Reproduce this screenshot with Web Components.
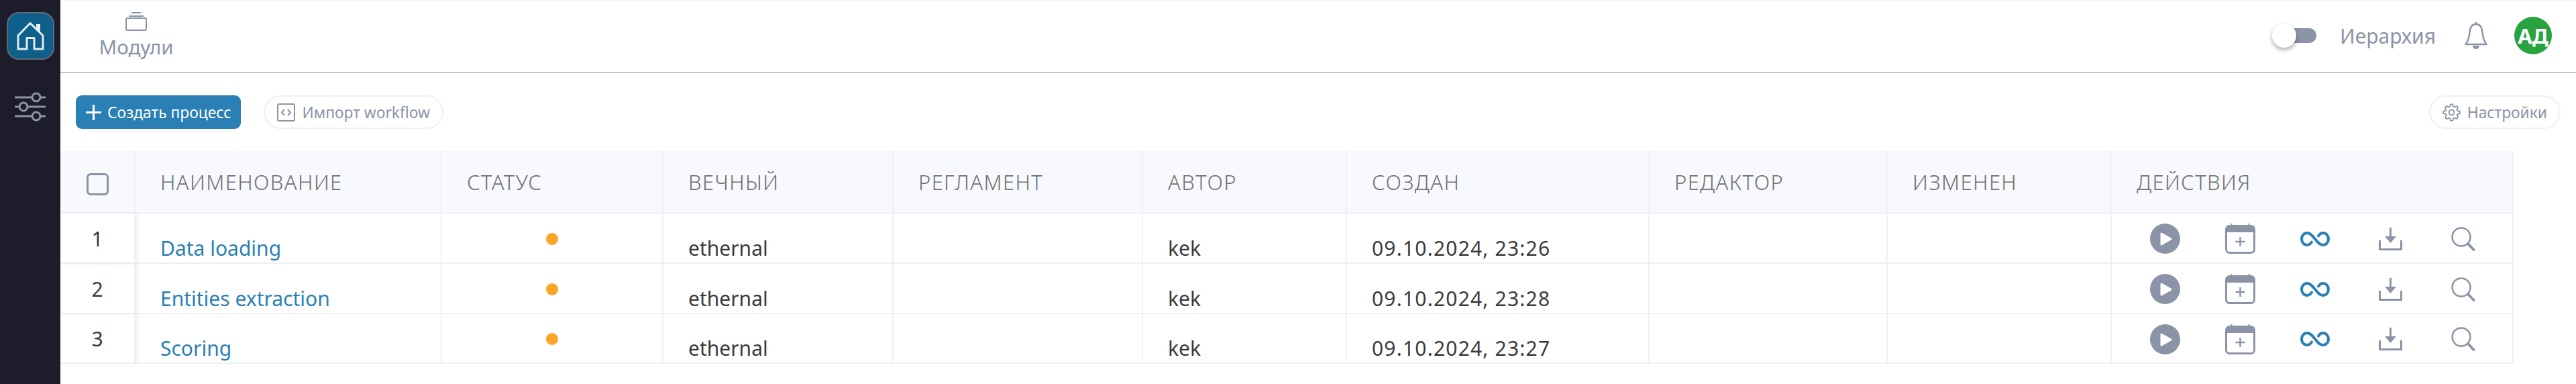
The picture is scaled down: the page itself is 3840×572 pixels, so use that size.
<!DOCTYPE html>
<html lang="ru">
<head>
<meta charset="utf-8">
<title>Модули</title>
<style>
  html, body { margin: 0; height: 100%; background: #fff; }
  body { font-family: "Noto Sans", "Open Sans", sans-serif; color: #333; display: flex; min-height: 572px; }
  main-view { flex: 1; min-width: 0; }
</style>
</head>
<body>
<side-rail></side-rail>
<main-view>
  <top-bar></top-bar>
  <process-toolbar></process-toolbar>
  <process-table></process-table>
</main-view>

<script>
const GREY = '#8a94a6';
const BLUE = '#2a7fb5';

/**
 * Dark navigation rail with the home button and the settings sliders.
 */
class SideRail extends HTMLElement {
    constructor() {
        super();
        this.attachShadow({ mode: 'open' });
    }

    connectedCallback() {
        this.shadowRoot.innerHTML = `
            <style>
                :host { display: flex; flex-direction: column; align-items: center; flex: none; width: 90px; background: #1c1c2b; padding-top: 18px; box-sizing: border-box; }
                .home { width: 71px; height: 71px; box-sizing: border-box; background: #0e5f8a; border: 2px solid #616a79; border-radius: 18px; display: flex; align-items: center; justify-content: center; }
                .filters { margin-top: 48px; display: block; }
            </style>
            <div class="home">
                <svg width="41" height="44" viewBox="0 0 41 44" fill="none" stroke="#e3ecf2" stroke-width="3" stroke-linejoin="round">
                    <path d="M2 21 20 2.500 39 21V41H26V24.500H15V41H2Z"/>
                    <path d="M29 4h6v12l-6-6z" fill="#e3ecf2" stroke="none"/>
                </svg>
            </div>
            <svg class="filters" width="46" height="44" viewBox="0 0 46 44" fill="none" stroke="${GREY}" stroke-width="3">
                <path d="M0 8H26M38 8H46M0 22H7M19 22H46M0 36H26M38 36H46"/>
                <circle cx="32" cy="8" r="6"/><circle cx="13" cy="22" r="6"/><circle cx="32" cy="36" r="6"/>
            </svg>
        `;
    }
}
customElements.define('side-rail', SideRail);

/**
 * Top bar: the module tab on the left, hierarchy switch, bell and avatar on the right.
 */
class TopBar extends HTMLElement {
    constructor() {
        super();
        this.attachShadow({ mode: 'open' });
    }

    connectedCallback() {
        this.shadowRoot.innerHTML = `
            <style>
                :host { display: flex; align-items: flex-start; height: 109px; box-sizing: border-box; border-bottom: 2px solid #c0c5d2; border-top: 1px solid #f5f5f5; }
                .tab { margin: 17px 0 0 55px; width: 116px; display: flex; flex-direction: column; align-items: center; color: ${GREY}; font-size: 29.500px; line-height: 34px; }
                .tab svg { display: block; margin-bottom: 7px; }
                .right { margin: 24px 36px 0 auto; display: flex; align-items: center; height: 56px; }
                .switch { position: relative; width: 66px; height: 22px; margin-top: 0; }
                .track { display: block; margin-left: 4px; height: 22px; background: ${GREY}; border-radius: 11px; }
                .knob { position: absolute; left: 0; top: -7px; width: 36px; height: 36px; border-radius: 50%; background: #fff; box-shadow: 0 3px 6px rgba(0,0,0,.35); }
                .label { margin-left: 35px; width: 146px; white-space: nowrap; color: ${GREY}; font-size: 30px; }
                .bell { margin-left: 40px; display: block; }
                .avatar { margin-left: 40px; width: 56px; height: 56px; border-radius: 50%; background: #28a33f; color: #fff; font-weight: 700; font-size: 31px; display: flex; align-items: center; justify-content: center; }
            </style>
            <div class="tab">
                <svg width="32" height="28" viewBox="0 0 32 28" fill="none" stroke="${GREY}" stroke-width="2">
                    <path d="M9 1H23M5 6H27"/>
                    <rect x="1" y="9" width="30" height="18" rx="2"/>
                </svg>
                <span>Модули</span>
            </div>
            <div class="right">
                <div class="switch"><span class="track"></span><span class="knob"></span></div>
                <span class="label">Иерархия</span>
                <svg class="bell" width="34" height="40" viewBox="0 0 34 40" fill="none" stroke="${GREY}" stroke-width="2.500">
                    <path d="M17 3C10 3 8 9 7.500 15 7 23 5 28 1.500 33H32.500C29 28 27 23 26.500 15 26 9 24 3 17 3Z" stroke-linejoin="round"/>
                    <path d="M17 0.500V3" stroke-linecap="round"/>
                    <path d="M12 35H22C22 38 20 40 17 40 14 40 12 38 12 35Z" fill="${GREY}" stroke="none"/>
                </svg>
                <div class="avatar">АД</div>
            </div>
        `;
    }
}
customElements.define('top-bar', TopBar);

/**
 * Pill or solid button with an icon passed through the "icon" slot.
 */
class ToolButton extends HTMLElement {
    constructor() {
        super();
        this.attachShadow({ mode: 'open' });
        this.shadowRoot.innerHTML = `
            <style>
                :host { display: inline-flex; align-items: center; box-sizing: border-box; height: 50px; font-size: 22.800px; white-space: nowrap; color: ${GREY}; background: #fff; border: 2px solid #f0f0f2; border-radius: 25px; padding: 0 18px; gap: 10px; }
                :host([primary]) { color: #fff; background: ${BLUE}; border-color: ${BLUE}; border-radius: 9px; padding: 0 13px; gap: 9px; }
                ::slotted(svg) { display: block; flex: none; }
            </style>
            <slot name="icon"></slot><slot></slot>
        `;
    }
}
customElements.define('tool-button', ToolButton);

/**
 * Row of actions above the table.
 */
class ProcessToolbar extends HTMLElement {
    constructor() {
        super();
        this.attachShadow({ mode: 'open' });
    }

    connectedCallback() {
        this.shadowRoot.innerHTML = `
            <style>
                :host { display: flex; align-items: flex-start; gap: 34px; height: 116px; box-sizing: border-box; padding: 33px 23px 0; }
                .end { margin-left: auto; }
            </style>
            <tool-button primary>
                <svg slot="icon" width="23" height="23" viewBox="0 0 23 23" stroke="#fff" stroke-width="3"><path d="M11.500 0V23M0 11.500H23"/></svg>
                Создать процесс
            </tool-button>
            <tool-button>
                <svg slot="icon" width="27" height="27" viewBox="0 0 27 27" fill="none" stroke="${GREY}" stroke-width="2">
                    <rect x="1" y="1" width="25" height="25" rx="2"/>
                    <path d="M11 9 7 13.500 11 18M16 9 20 13.500 16 18"/>
                </svg>
                Импорт workflow
            </tool-button>
            <tool-button class="end">
                <svg slot="icon" width="27" height="27" viewBox="0 0 24 24" fill="none" stroke="${GREY}" stroke-width="1.600" stroke-linejoin="round">
                    <circle cx="12" cy="12" r="3.500"/>
                    <path d="M19.400 15a1.650 1.650 0 0 0 .33 1.820l.06.06a2 2 0 1 1-2.830 2.830l-.06-.06a1.650 1.650 0 0 0-2.800 1.170V21a2 2 0 1 1-4 0v-.09a1.650 1.650 0 0 0-2.800-1.170l-.06.06a2 2 0 1 1-2.830-2.830l.06-.06A1.650 1.650 0 0 0 3.090 14H3a2 2 0 1 1 0-4h.09a1.650 1.650 0 0 0 1.170-2.800l-.06-.06a2 2 0 1 1 2.830-2.830l.06.06A1.650 1.650 0 0 0 10 3.090V3a2 2 0 1 1 4 0v.09a1.650 1.650 0 0 0 2.800 1.170l.06-.06a2 2 0 1 1 2.830 2.830l-.06.06A1.650 1.650 0 0 0 20.910 10H21a2 2 0 1 1 0 4h-.09a1.650 1.650 0 0 0-1.510 1z"/>
                </svg>
                Настройки
            </tool-button>
        `;
    }
}
customElements.define('process-toolbar', ProcessToolbar);

/**
 * Table of processes, rendered from a small data list.
 */
class ProcessTable extends HTMLElement {
    constructor() {
        super();
        this.attachShadow({ mode: 'open' });
    }

    connectedCallback() {
        const widths = [112, 457, 330, 343, 372, 304, 451, 355, 334, 599];
        const heads = ['НАИМЕНОВАНИЕ', 'СТАТУС', 'ВЕЧНЫЙ', 'РЕГЛАМЕНТ', 'АВТОР', 'СОЗДАН', 'РЕДАКТОР', 'ИЗМЕНЕН', 'ДЕЙСТВИЯ'];
        const rows = [
            { name: 'Data loading', created: '09.10.2024, 23:26', height: 75 },
            { name: 'Entities extraction', created: '09.10.2024, 23:28', height: 75 },
            { name: 'Scoring', created: '09.10.2024, 23:27', height: 74 }
        ];
        const actions = `
            <div class="actions">
                <svg width="45" height="45" viewBox="0 0 45 45"><circle cx="22.500" cy="22.500" r="22.500" fill="${GREY}"/><path d="M17 15 31 23 17 31Z" fill="#fff" stroke="#fff" stroke-width="3" stroke-linejoin="round"/></svg>
                <svg width="45" height="45" viewBox="0 0 45 45" fill="none" stroke="${GREY}" stroke-width="3">
                    <rect x="1.500" y="3.500" width="42" height="40" rx="5"/>
                    <path d="M1.500 9a5 5 0 0 1 5-5h32a5 5 0 0 1 5 5v4h-42z" fill="${GREY}" stroke="none"/>
                    <path d="M9.500 0V4M35.500 0V4" stroke-width="2"/>
                    <path d="M22.500 20V34M15.500 27H29.500" stroke-width="2.500"/>
                </svg>
                <svg width="44" height="22" viewBox="0 0 44 22" fill="none" stroke="${BLUE}" stroke-width="4" stroke-linecap="round"><path d="M17 15.500C15 18.500 13 20 10.500 20 5.500 20 2 16 2 11 2 6 5.500 2 10.500 2 15 2 18 6 22 11 26 16 29 20 33.500 20 38.500 20 42 16 42 11 42 6 38.500 2 33.500 2 31 2 29 3.500 27 6.500"/></svg>
                <svg width="35" height="34" viewBox="0 0 35 34" fill="none" stroke="${GREY}" stroke-width="3">
                    <path d="M17.500 0V14"/><path d="M9 13H26L17.500 23Z" fill="${GREY}" stroke="none"/>
                    <path d="M1.500 19V32.500H33.500V19"/>
                </svg>
                <svg class="lens" width="36" height="36" viewBox="0 0 36 36" fill="none" stroke="${GREY}">
                    <circle cx="15" cy="15" r="13.500" stroke-width="2.500"/>
                    <path d="M25 25 33.500 34" stroke-width="4" stroke-linecap="round"/>
                </svg>
            </div>`;
        const body = rows.map((row, i) => `
            <tr style="height:${row.height}px">
                <td class="num">${i + 1}</td>
                <td class="low"><span class="link">${row.name}</span></td>
                <td class="status"><span class="dot"></span></td>
                <td class="low">ethernal</td>
                <td></td>
                <td class="low">kek</td>
                <td class="low date">${row.created}</td>
                <td></td>
                <td></td>
                <td class="icons">${actions}</td>
            </tr>`).join('');
        this.shadowRoot.innerHTML = `
            <style>
                :host { display: block; width: 3657px; font-size: 30px; color: #3a3a3a; }
                table { table-layout: fixed; width: 100%; border-collapse: separate; border-spacing: 0; }
                th, td { box-sizing: border-box; padding: 0 0 0 37px; border-right: 2px solid #eff0f3; border-bottom: 2px solid #eff0f3; text-align: left; white-space: nowrap; overflow: hidden; }
                th { height: 93px; background: #f7f9fc; font-weight: 300; color: #6f6f73; font-size: 31px; letter-spacing: 1.400px; }
                td.low { vertical-align: bottom; padding-bottom: 1px; }
                td.date { letter-spacing: 1.200px; }
                td.num { padding: 1px 0 0; text-align: center; position: relative; box-shadow: 4px 0 6px rgba(0,0,0,.05); }
                td.status { padding: 2px 0 0 155px; }
                td.icons { padding: 2px 0 0 23px; }
                th.check { padding: 0; text-align: center; }
                .box { display: inline-block; vertical-align: middle; width: 33px; height: 33px; box-sizing: border-box; border: 3px solid ${GREY}; border-radius: 6px; }
                .link { color: ${BLUE}; }
                .dot { display: block; width: 18px; height: 18px; border-radius: 50%; background: #fba526; }
                .actions { display: grid; grid-template-columns: repeat(5, 112px); justify-items: center; align-items: center; }
                .actions svg { display: block; }
                .actions .lens { margin-right: 6px; }
            </style>
            <table>
                <colgroup>${widths.map(w => `<col style="width:${w}px">`).join('')}</colgroup>
                <thead><tr><th class="check"><span class="box"></span></th>${heads.map(h => `<th>${h}</th>`).join('')}</tr></thead>
                <tbody>${body}</tbody>
            </table>
        `;
    }
}
customElements.define('process-table', ProcessTable);

class MainView extends HTMLElement {
    constructor() {
        super();
        this.attachShadow({ mode: 'open' }).innerHTML = `<style>:host { display: block; }</style><slot></slot>`;
    }
}
customElements.define('main-view', MainView);
</script>
</body>
</html>
